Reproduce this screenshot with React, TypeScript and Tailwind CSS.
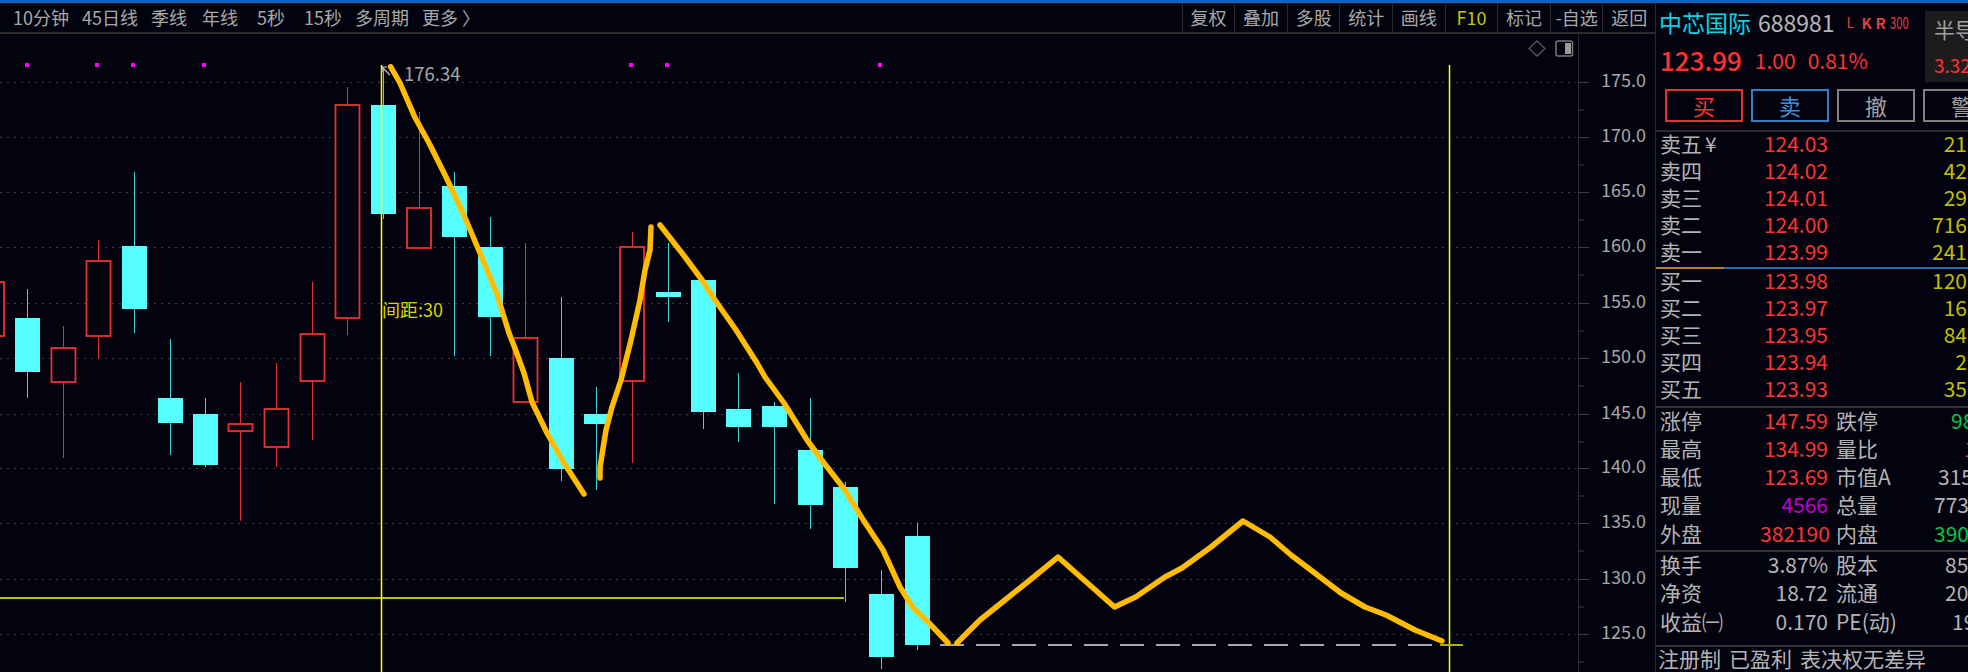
const candles: [string, number, number, number, number, number][] = [
  // type, center x, wick top, body top, body bottom, wick bottom
  ["r", -8, 281, 282, 336, 336],
  ["c", 27.5, 289, 318, 372, 398],
  ["r", 63.5, 326, 348, 382, 458],
  ["r", 98.5, 240, 261, 336, 359],
  ["c", 134.5, 172, 246, 309, 333],
  ["c", 170.5, 339, 398, 423, 455],
  ["c", 205, 398, 414, 465, 467],
  ["r", 240.5, 382, 424, 431, 521],
  ["r", 276.5, 363, 409, 447, 467],
  ["r", 312.5, 282, 334, 381, 440],
  ["r", 347.5, 87, 105, 318, 335],
  ["c", 383.5, 68, 105, 214, 219],
  ["r", 419, 112, 208, 248, 248],
  ["c", 454, 172, 186, 237, 356],
  ["c", 490, 217, 247, 317, 356],
  ["r", 525.5, 243, 338, 402, 402],
  ["c", 561.5, 297, 358, 469, 481],
  ["c", 596.5, 387, 414, 424, 490],
  ["r", 632, 232, 247, 381, 463],
  ["c", 668, 243, 292, 297, 322],
  ["c", 703, 280, 280, 412, 429],
  ["c", 738.5, 373, 409, 427, 442],
  ["c", 774.5, 402, 406, 427, 504],
  ["c", 810.5, 398, 450, 505, 529],
  ["c", 845.5, 482, 487, 568, 602],
  ["c", 881.5, 570, 594, 657, 669],
  ["c", 917.5, 523, 536, 645, 650],
];

const curves = [
  "390.6,66.7 400,83 414.6,116.7 429,143 446,177 463,213 480,253 496.6,293 509,333 515.6,350 524,373 532,402 547,433 564,463 584,494",
  "600,478 600,467 606,430 612,407 621,380 631,340 640,300 645,270 650,250 651,227",
  "660,225 685,257 702,280 715,300 736,330 757,363 765,377 784,403 807,440 824,463 845,490 862,518 883,550 900,587 912.5,607 929,623 948,643",
  "957,643 980,620 1005,600 1030,580 1058,557 1114.5,607 1135.6,597 1165,577 1182,568 1211,547 1243,521 1270,537 1291,555 1320,577 1341,593 1365,607 1386,615 1415,630 1442,641",
];

const gridY = [82, 137, 192, 247, 303, 358, 414, 468, 523, 579, 634];
const axisLabels = ["175.0", "170.0", "165.0", "160.0", "155.0", "150.0", "145.0", "140.0", "135.0", "130.0", "125.0"];
const pinkDots = [27, 97, 133, 204, 631, 667, 880];

const toolbarLeft = [
  { t: "10分钟", c: "" },
  { t: "45日线", c: "" },
  { t: "季线", c: "" },
  { t: "年线", c: "ml-[2px]" },
  { t: "5秒", c: "ml-[6px]" },
  { t: "15秒", c: "ml-[6px]" },
  { t: "多周期", c: "" },
  { t: "更多 〉", c: "" },
];
const toolbarRight = ["复权", "叠加", "多股", "统计", "画线", "F10", "标记", "-自选", "返回"];

const sellRows = [
  ["卖五", "124.03", "21"],
  ["卖四", "124.02", "42"],
  ["卖三", "124.01", "29"],
  ["卖二", "124.00", "716"],
  ["卖一", "123.99", "241"],
];
const buyRows = [
  ["买一", "123.98", "120"],
  ["买二", "123.97", "16"],
  ["买三", "123.95", "84"],
  ["买四", "123.94", "2"],
  ["买五", "123.93", "35"],
];
const statsA = [
  { a: "涨停", b: "147.59", bc: "text-[#ff3232]", c: "跌停", d: "98", dc: "text-[#00c840] pl-[55px]" },
  { a: "最高", b: "134.99", bc: "text-[#ff3232]", c: "量比", d: "1", dc: "text-[#ff3232] pl-[68px]" },
  { a: "最低", b: "123.69", bc: "text-[#ff3232]", c: "市值A", d: "315", dc: "text-[#b4b4b4] pl-[42px]" },
  { a: "现量", b: "4566", bc: "text-[#c000d0]", c: "总量", d: "773", dc: "text-[#b4b4b4] pl-[38px]" },
  { a: "外盘", b: "382190", bc: "text-[#ff3232]", c: "内盘", d: "390", dc: "text-[#00c840] pl-[38px]" },
];
const statsB = [
  { a: "换手", b: "3.87%", bc: "text-[#b4b4b4]", c: "股本", d: "85", dc: "text-[#b4b4b4] pl-[49px]" },
  { a: "净资", b: "18.72", bc: "text-[#b4b4b4]", c: "流通", d: "20", dc: "text-[#b4b4b4] pl-[49px]" },
  { a: "收益㈠", b: "0.170", bc: "text-[#b4b4b4]", c: "PE(动)", d: "19", dc: "text-[#b4b4b4] pl-[56px]" },
];

function Chart() {
  return (
    <svg className="block w-[1655px] h-[638px]" viewBox="0 34 1655 638" fontFamily="'Noto Sans CJK SC', sans-serif">
      {/* grid */}
      {gridY.map((y) => (
        <line key={y} x1="0" x2="1576" y1={y + 0.5} y2={y + 0.5} stroke="#3c3c3c" strokeWidth="1" strokeDasharray="2 5" />
      ))}
      {/* axis */}
      <line x1="1578.5" x2="1578.5" y1="34" y2="672" stroke="#2c2c2c" />
      {gridY.map((y, i) => (
        <g key={y}>
          <line x1="1578" x2="1589" y1={y + 0.5} y2={y + 0.5} stroke="#3c3c3c" />
          <line x1="1578" x2="1584" y1={y + 28} y2={y + 28} stroke="#3c3c3c" />
          <text x="1601" y={y + 5} fontSize="18" fill="#a8a8a8">
            {axisLabels[i]}
          </text>
        </g>
      ))}
      {pinkDots.map((x) => (
        <rect key={x} x={x - 2} y="63" width="4" height="4" fill="#ff00ff" />
      ))}
      {/* candles */}
      {candles.map(([type, x, wt, bt, bb, wb], i) =>
        type === "r" ? (
          <g key={i}>
            <line x1={x} x2={x} y1={wt} y2={bt} stroke="#e03030" shapeRendering="crispEdges" />
            <line x1={x} x2={x} y1={bb} y2={wb} stroke="#e03030" shapeRendering="crispEdges" />
            <rect x={x - 12} y={bt} width="24" height={bb - bt} fill="#03030f" stroke="#ee3030" strokeWidth="1.8" />
          </g>
        ) : (
          <g key={i} shapeRendering="crispEdges">
            <line x1={x} x2={x} y1={wt} y2={wb} stroke="#40d4d8" />
            <rect x={x - 12.5} y={bt} width="25" height={bb - bt} fill="#55ffff" />
          </g>
        )
      )}
      {/* crosshair */}
      <g stroke="#ffff00">
        <line x1="381.5" x2="381.5" y1="65" y2="672" strokeWidth="1.5" />
        <line x1="1449.5" x2="1449.5" y1="65" y2="672" strokeWidth="1.5" />
        <line x1="0" x2="844" y1="598" y2="598" strokeWidth="1.5" />
      </g>
      <line x1="940" x2="1440" y1="645" y2="645" stroke="#a8a8a8" strokeWidth="2" strokeDasharray="24 12" />
      <line x1="1440" x2="1463" y1="645" y2="645" stroke="#b0b000" strokeWidth="2" />
      {/* hand drawn */}
      {curves.map((pts) => (
        <polyline key={pts} points={pts} fill="none" stroke="#ffbc00" strokeWidth="5.5" strokeLinejoin="round" strokeLinecap="round" />
      ))}
      {/* high marker */}
      <path d="M382 67l8 8M382 67h5M382 67v5" stroke="#c8c8c8" strokeWidth="1.2" fill="none" />
      <text x="404" y="81" fontSize="18.5" fill="#a8a8a8">
        176.34
      </text>
      <text x="382" y="317" fontSize="18" fill="#d8d800">
        间距:30
      </text>
      {/* top right icons */}
      <path d="M1537 41l8 7.5-8 7.5-8-7.5z" fill="none" stroke="#5a5a5a" strokeWidth="1.3" />
      <rect x="1556" y="41" width="16.5" height="15" rx="2" fill="none" stroke="#7a7a7a" strokeWidth="1.5" />
      <rect x="1565" y="43" width="6" height="11" fill="#9a9a9a" />
    </svg>
  );
}

function BookRow({ row }: { row: string[] }) {
  return (
    <div className="flex items-center h-[26.9px] pl-[4px] pb-[4px]">
      <span className="w-[100px] text-[#b4b4b4]">
        {row[0]}
        {row[0] === "卖五" && <span className="ml-[3px]">¥</span>}
      </span>
      <span className="w-[68px] text-right text-[#ff3232]">{row[1]}</span>
      <span className="flex-1 text-right text-[#c0c000] pr-[1px]">{row[2]}</span>
    </div>
  );
}

function StatRow({ s }: { s: (typeof statsA)[number] }) {
  return (
    <div className="flex items-center h-[28.3px] pl-[4px] pb-[4px]">
      <span className="w-[100px] text-[#b4b4b4]">{s.a}</span>
      <span className={`w-[68px] text-right ${s.bc}`}>{s.b}</span>
      <span className="w-[60px] ml-[8px] text-[#b4b4b4] whitespace-nowrap">{s.c}</span>
      <span className={`flex-1 whitespace-nowrap overflow-hidden ${s.dc}`}>{s.d}</span>
    </div>
  );
}

export default function App() {
  return (
    <div className="w-[1968px] h-[672px] flex flex-col overflow-hidden bg-[#03030f] font-['Noto_Sans_CJK_SC',sans-serif]">
      <div className="h-[3px] bg-[#1460c0]"></div>
      <div className="flex flex-1 min-h-0">
        {/* Left */}
        <div className="w-[1655px] flex flex-col">
          <div className="h-[31px] flex items-center border-t border-b-2 border-t-[#1a1a22] border-b-[#2c2c2c] text-[18px] text-[#a8a8a8]">
            <div className="flex items-center gap-[13px] pl-[13px] pb-[2px]">
              {toolbarLeft.map((item) => (
                <span key={item.t} className={item.c}>
                  {item.t}
                </span>
              ))}
            </div>
            <div className="ml-auto flex items-center h-full">
              {toolbarRight.map((t) => (
                <span
                  key={t}
                  className={`w-[52.6px] h-full flex items-center justify-center border-l border-[#2c2c2c] pb-[2px] ${
                    t === "F10" ? "text-[#c8c800]" : ""
                  }`}
                >
                  {t}
                </span>
              ))}
            </div>
          </div>
          <Chart />
        </div>

        {/* Right panel */}
        <div className="flex-1 min-w-0 border-l border-[#2c2c2c] flex flex-col text-[21px] leading-none overflow-hidden">
          <div className="h-[127px] relative">
            <div className="flex items-center h-[38px] pl-[3px]">
              <span className="text-[23px] text-[#00d8e8]">中芯国际</span>
              <span className="ml-[7px] text-[23px] text-[#b8b8b8]">688981</span>
              <span className="ml-[12px] flex items-center text-[#e04040]">
                <span className="text-[14px] w-[15px]">L</span>
                <span className="text-[15px] font-bold w-[14px]">K</span>
                <span className="text-[15px] font-bold w-[14px]">R</span>
                <span className="text-[16px] w-[20px] inline-block scale-x-[0.7] origin-left">300</span>
              </span>
            </div>
            <div className="flex items-center h-[38px] pl-[4px] text-[#ff3232]">
              <span className="text-[26px] font-medium">123.99</span>
              <span className="ml-[13px]">1.00</span>
              <span className="ml-[12px]">0.81%</span>
            </div>
            {/* sector badge */}
            <div className="absolute left-[269px] top-[8px] w-[60px] h-[71px] bg-[#1c1c1e] pl-[9px] whitespace-nowrap">
              <div className="text-[21px] text-[#a0a0a0] mt-[8px]">半导体</div>
              <div className="text-[19px] text-[#ff3232] mt-[15px]">3.32</div>
            </div>
            <div className="flex gap-[8px] pl-[9px] mt-[10px] w-[400px]">
              <div className="w-[78px] h-[33px] border-2 border-[#e03030] text-[#ff3232] text-[22px] pb-[2px] flex items-center justify-center">买</div>
              <div className="w-[78px] h-[33px] border-2 border-[#2f80c8] text-[#3a90d8] text-[22px] pb-[2px] flex items-center justify-center">卖</div>
              <div className="w-[78px] h-[33px] border-2 border-[#808080] text-[#a0a0a0] text-[22px] pb-[2px] flex items-center justify-center">撤</div>
              <div className="w-[78px] h-[33px] border-2 border-[#808080] text-[#a0a0a0] text-[22px] pb-[2px] flex items-center justify-center">警</div>
            </div>
          </div>

          <div className="h-[2px] bg-[#2c2c2c]"></div>
          {sellRows.map((r) => (
            <BookRow key={r[0]} row={r} />
          ))}
          <div className="flex h-[2px] mt-[1px]">
            <div className="w-[68px] bg-[#b8802a]"></div>
            <div className="flex-1 bg-[#2a6fa8]"></div>
          </div>
          {buyRows.map((r) => (
            <BookRow key={r[0]} row={r} />
          ))}
          <div className="h-[2px] mt-[2px] bg-[#333]"></div>
          {statsA.map((s) => (
            <StatRow key={s.a} s={s} />
          ))}
          <div className="h-[2px] mt-[1px] bg-[#333]"></div>
          {statsB.map((s) => (
            <StatRow key={s.a} s={s} />
          ))}
          <div className="h-[2px] mt-[8px] bg-[#333]"></div>
          <div className="flex items-center gap-[8px] flex-1 pl-[2px] pb-[2px] text-[#b4b4b4] whitespace-nowrap">
            <span>注册制</span>
            <span>已盈利</span>
            <span>表决权无差异</span>
          </div>
        </div>
      </div>
    </div>
  );
}
